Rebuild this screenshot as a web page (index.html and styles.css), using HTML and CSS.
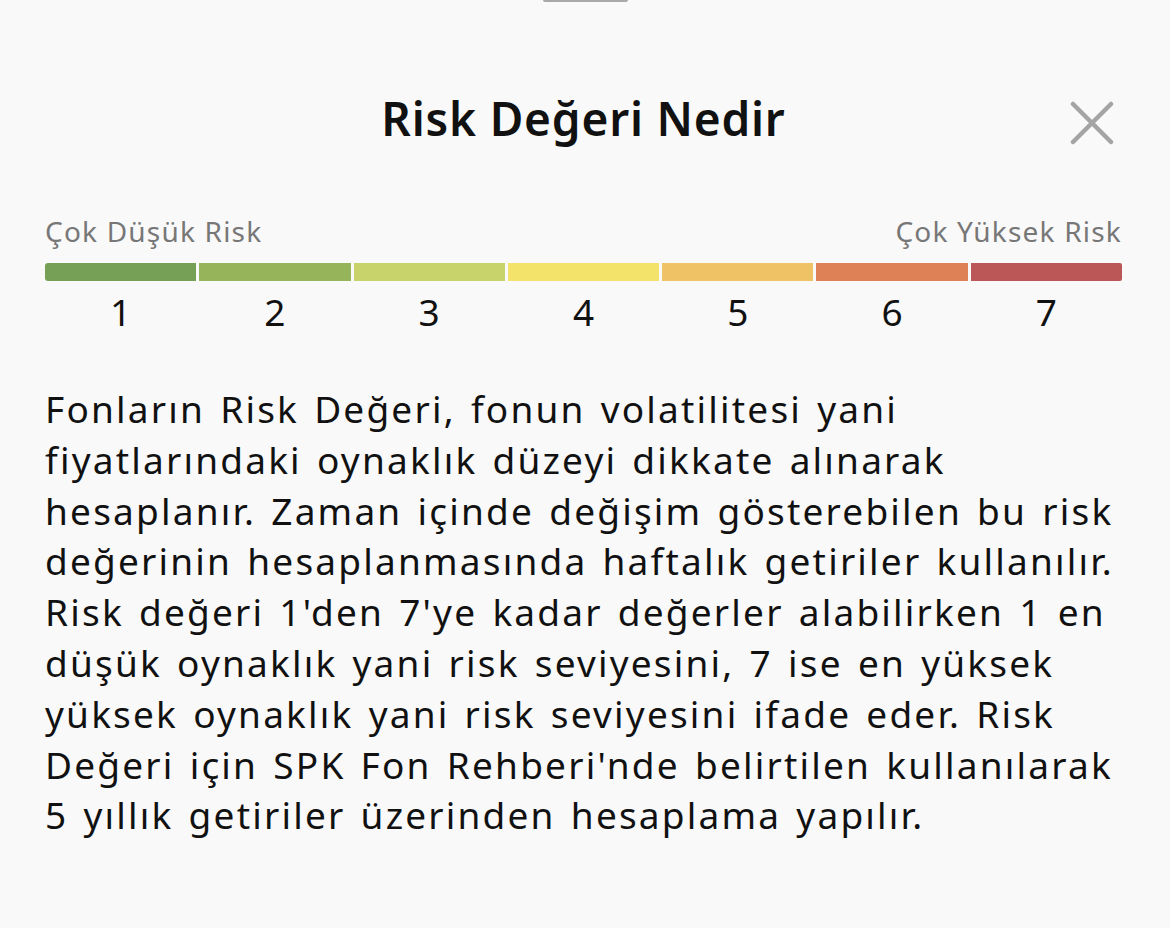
FILE: index.html
```html
<!DOCTYPE html>
<html lang="tr">
<head>
  <meta charset="UTF-8" />
  <meta name="viewport" content="width=device-width, initial-scale=1.0" />
  <title>Risk Değeri Nedir</title>
  <link rel="stylesheet" href="styles.css">
</head>
<body>
  <div class="sheet">
    <div class="handle"></div>

    <div class="header">
      <h2>Risk Değeri Nedir</h2>
      <button class="close" aria-label="Kapat">
        <svg width="44" height="44" viewBox="0 0 44 44">
          <path d="M3 3 L41 41 M41 3 L3 41" stroke="#a4a4a4" stroke-width="4.5" stroke-linecap="round" fill="none" />
        </svg>
      </button>
    </div>

    <div class="scale-labels">
      <span>Çok Düşük Risk</span>
      <span>Çok Yüksek Risk</span>
    </div>
    <div class="scale">
      <div class="level l1"></div>
      <div class="level l2"></div>
      <div class="level l3"></div>
      <div class="level l4"></div>
      <div class="level l5"></div>
      <div class="level l6"></div>
      <div class="level l7"></div>
    </div>
    <div class="scale scale-numbers">
      <span>1</span><span>2</span><span>3</span><span>4</span><span>5</span><span>6</span><span>7</span>
    </div>

    <p class="info">
      Fonların Risk Değeri, fonun volatilitesi yani<br>
      fiyatlarındaki oynaklık düzeyi dikkate alınarak<br>
      hesaplanır. Zaman içinde değişim gösterebilen bu risk<br>
      değerinin hesaplanmasında haftalık getiriler kullanılır.<br>
      Risk değeri 1'den 7'ye kadar değerler alabilirken 1 en<br>
      düşük oynaklık yani risk seviyesini, 7 ise en yüksek<br>
      yüksek oynaklık yani risk seviyesini ifade eder. Risk<br>
      Değeri için SPK Fon Rehberi'nde belirtilen kullanılarak<br>
      5 yıllık getiriler üzerinden hesaplama yapılır.
    </p>
  </div>
</body>
</html>
```

FILE: styles.css
```css
body {
  margin: 0;
  background-color: #f9f9f9;
  color: #111;
  font-family: 'Noto Sans', 'Open Sans', sans-serif;
  height: 100vh;
  overflow: hidden;
}
.sheet {
  padding: 0 48px 0 45px;
}
.handle {
  width: 85px;
  height: 4px;
  margin: -2px auto 0 calc(50% - 41px);
  background-color: #a9a9a9;
  border-radius: 2px;
}
.header {
  display: grid;
  grid-template-columns: 1fr auto 1fr;
  align-items: center;
  margin-top: 86px;
}
.header h2 {
  grid-column: 2;
  margin: 0;
  font-size: 46px;
  line-height: 60px;
  font-weight: 600;
  letter-spacing: 0.8px;
  color: #111;
}
.close {
  grid-column: 3;
  justify-self: end;
  margin: 10px 8px 0 0;
  padding: 0;
  border: none;
  background: none;
  display: flex;
  cursor: pointer;
}
.scale-labels {
  display: flex;
  justify-content: space-between;
  margin-top: 65px;
  font-size: 28px;
  line-height: 36px;
  letter-spacing: 1.2px;
  color: #777;
}
.scale {
  display: grid;
  grid-template-columns: repeat(7, 1fr);
  gap: 3px;
  margin-top: 14px;
}
.level {
  height: 18px;
}
.l1 { background-color: #76a056; border-radius: 3px 0 0 3px; }
.l2 { background-color: #96b45a; }
.l3 { background-color: #c8d46b; }
.l4 { background-color: #f3e36a; }
.l5 { background-color: #efc266; }
.l6 { background-color: #de8157; }
.l7 { background-color: #bb5857; border-radius: 0 2px 2px 0; }
.scale-numbers {
  margin-top: 11px;
  font-size: 37px;
  line-height: 40px;
  text-align: center;
}
.info {
  margin: 52px 0 0;
  font-size: 37px;
  line-height: 50.8px;
  letter-spacing: 2.2px;
  word-spacing: 3.3px;
  white-space: nowrap;
}
```
